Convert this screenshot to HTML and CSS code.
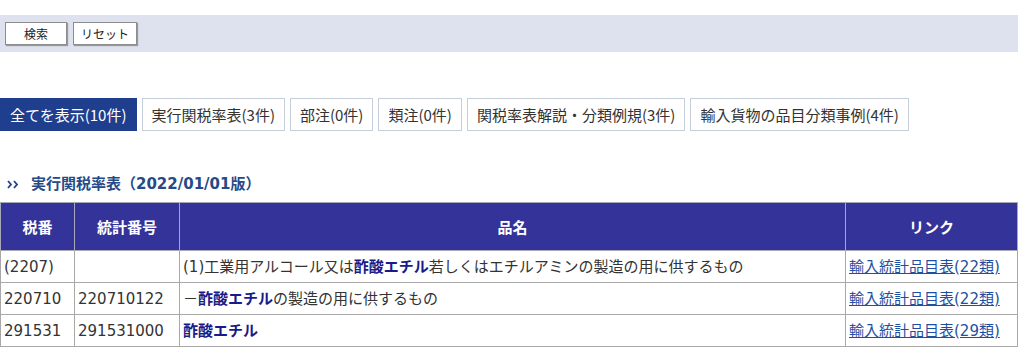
FILE: index.html
```html
<!DOCTYPE html>
<html lang="ja">
	<head>
		<meta charset="utf-8">
		<title>実行関税率表 検索結果</title>
		<link rel="stylesheet" href="styles.css">
	</head>
	<body>
		<div class="page">
			<div class="searchbar">
				<button class="btn">検索</button>
				<button class="btn">リセット</button>
			</div>

			<ul class="tabs">
				<li class="tab active">全てを表示(10件)</li>
				<li class="tab">実行関税率表(3件)</li>
				<li class="tab">部注(0件)</li>
				<li class="tab">類注(0件)</li>
				<li class="tab">関税率表解説・分類例規(3件)</li>
				<li class="tab">輸入貨物の品目分類事例(4件)</li>
			</ul>

			<h2 class="section-title">
				<svg class="mark" width="12" height="9" viewBox="0 0 12 9">
					<path d="M1 1 L4 4.5 L1 8" fill="none" stroke="#22408a" stroke-width="1.8"/>
					<path d="M7 1 L10 4.5 L7 8" fill="none" stroke="#22408a" stroke-width="1.8"/>
				</svg>
				実行関税率表（2022/01/01版）
			</h2>

			<table class="result">
				<tr>
					<th class="c1">税番</th>
					<th class="c2">統計番号</th>
					<th class="c3">品名</th>
					<th class="c4">リンク</th>
				</tr>
				<tr>
					<td>(2207)</td>
					<td></td>
					<td>(1)工業用アルコール又は<b>酢酸エチル</b>若しくはエチルアミンの製造の用に供するもの</td>
					<td><a href="#">輸入統計品目表(22類)</a></td>
				</tr>
				<tr>
					<td>220710</td>
					<td>220710122</td>
					<td>－<b>酢酸エチル</b>の製造の用に供するもの</td>
					<td><a href="#">輸入統計品目表(22類)</a></td>
				</tr>
				<tr>
					<td>291531</td>
					<td>291531000</td>
					<td><b>酢酸エチル</b></td>
					<td><a href="#">輸入統計品目表(29類)</a></td>
				</tr>
			</table>
		</div>
	</body>
</html>
```

FILE: styles.css
```css
body
{
	margin : 0;
	background : #ffffff;
	font-family : "DejaVu Sans", "Noto Sans CJK JP", sans-serif;
	color : #333333;
}
.page
{
	width : 1018px;
	padding-top : 15px;
}
.searchbar
{
	background : #dde2ee;
	height : 37px;
	display : flex;
	align-items : center;
	gap : 6px;
	padding-left : 5px;
}
.btn
{
	height : 23px;
	background : #ffffff;
	border : 1px solid #8c8c8c;
	box-shadow : 1px 1px 1px #9a9a9a;
	font-family : "Noto Sans CJK JP", sans-serif;
	font-size : 12px;
	line-height : 1;
	color : #222222;
	padding : 0;
}
.btn:first-child
{
	width : 62px;
}
.btn:last-child
{
	width : 64px;
}
.tabs
{
	list-style : none;
	margin : 46px 0 0 0;
	padding : 0;
	display : flex;
	gap : 5px;
	font-family : "Noto Sans CJK JP", sans-serif;
}
.tab
{
	height : 31px;
	line-height : 31px;
	padding : 0 9px;
	border : 1px solid #c6cedb;
	font-size : 15px;
	color : #333333;
	background : #ffffff;
}
.tab.active
{
	background : #1f3f8e;
	border-color : #1f3f8e;
	color : #ffffff;
}
.section-title
{
	margin : 40px 0 5px 0;
	padding-left : 7px;
	height : 26px;
	font-size : 15px;
	font-weight : bold;
	line-height : 26px;
	color : #254a86;
	display : flex;
	align-items : center;
	gap : 12px;
}
.mark
{
	flex : none;
}
.result
{
	width : 1018px;
	border-collapse : collapse;
	font-size : 15px;
}
.result th
{
	background : #333399;
	color : #ffffff;
	font-size : 15px;
	font-weight : bold;
	height : 47px;
	border : 1px solid #a8a8b8;
	padding : 0;
}
.result td
{
	height : 31px;
	border : 1px solid #a8a8a8;
	padding : 0 3px;
	line-height : 20px;
	white-space : nowrap;
}
.result b
{
	color : #1a1a8a;
}
.result a
{
	color : #1f4fa3;
	text-decoration : underline;
}
.c1
{
	width : 73px;
}
.c2
{
	width : 104px;
}
.c4
{
	width : 171px;
}
```
